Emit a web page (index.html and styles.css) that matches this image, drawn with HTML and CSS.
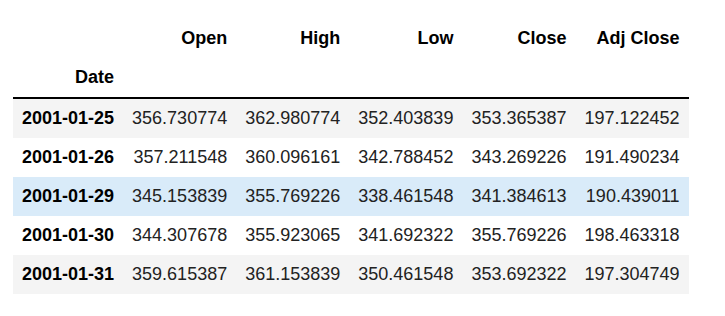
FILE: index.html
```html
<!DOCTYPE html>
<html lang="en">
<head>
    <meta charset="UTF-8">
    <meta name="viewport" content="width=device-width, initial-scale=1.0">
    <title>DataFrame</title>
    <link rel="stylesheet" href="styles.css">
</head>
<body>
    <div class="output">
        <table class="dataframe">
            <thead>
                <tr>
                    <th></th>
                    <th>Open</th>
                    <th>High</th>
                    <th>Low</th>
                    <th>Close</th>
                    <th>Adj Close</th>
                </tr>
                <tr>
                    <th>Date</th>
                    <th></th>
                    <th></th>
                    <th></th>
                    <th></th>
                    <th></th>
                </tr>
            </thead>
            <tbody>
                <tr>
                    <th>2001-01-25</th>
                    <td>356.730774</td>
                    <td>362.980774</td>
                    <td>352.403839</td>
                    <td>353.365387</td>
                    <td>197.122452</td>
                </tr>
                <tr>
                    <th>2001-01-26</th>
                    <td>357.211548</td>
                    <td>360.096161</td>
                    <td>342.788452</td>
                    <td>343.269226</td>
                    <td>191.490234</td>
                </tr>
                <tr class="hover">
                    <th>2001-01-29</th>
                    <td>345.153839</td>
                    <td>355.769226</td>
                    <td>338.461548</td>
                    <td>341.384613</td>
                    <td>190.439011</td>
                </tr>
                <tr>
                    <th>2001-01-30</th>
                    <td>344.307678</td>
                    <td>355.923065</td>
                    <td>341.692322</td>
                    <td>355.769226</td>
                    <td>198.463318</td>
                </tr>
                <tr>
                    <th>2001-01-31</th>
                    <td>359.615387</td>
                    <td>361.153839</td>
                    <td>350.461548</td>
                    <td>353.692322</td>
                    <td>197.304749</td>
                </tr>
            </tbody>
        </table>
    </div>
</body>
</html>
```

FILE: styles.css
```css
body {
    margin: 0;
    background: #fff;
    font-family: 'Liberation Sans', Arial, sans-serif;
    font-size: 18px;
}
.output {
    padding: 19px 0 0 13px;
}
.dataframe {
    border-collapse: collapse;
    border-spacing: 0;
    border: none;
}
.dataframe thead {
    border-bottom: 2px solid #000;
}
.dataframe th,
.dataframe td {
    padding: 0.5em 0.5em;
    line-height: normal;
    text-align: right;
    vertical-align: middle;
    white-space: nowrap;
}
.dataframe th {
    font-weight: bold;
    color: #000;
}
.dataframe td {
    color: #222;
}
.dataframe tbody tr:nth-child(odd) {
    background: #f4f4f4;
}
.dataframe tbody tr.hover {
    background: #d9ebf9;
}
```
